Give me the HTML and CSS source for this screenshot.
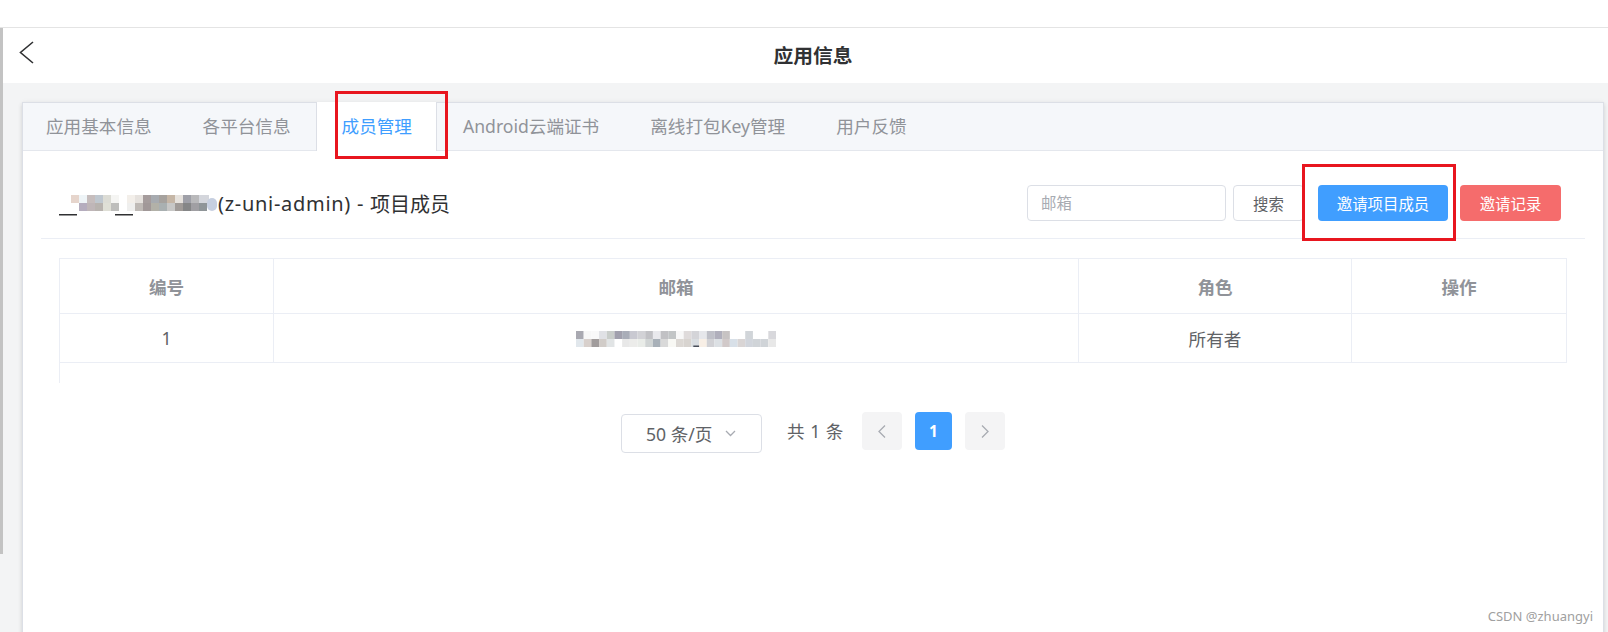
FILE: index.html
```html
<!DOCTYPE html>
<html lang="zh-CN">
<head>
<meta charset="utf-8">
<title>应用信息</title>
<link rel="stylesheet" href="styles.css">
</head>
<body>
<div class="topbar"></div>
<div class="frame">
  <div class="edge"></div>
  <div class="main">
    <header class="appbar">
      <button class="back" aria-label="返回">
        <svg width="18" height="24" viewBox="0 0 18 24"><polyline points="15,1 2.5,11.5 15,22" fill="none" stroke="#303133" stroke-width="1.6"/></svg>
      </button>
      <h1 class="app-title">应用信息</h1>
      <div></div>
    </header>
    <div class="page">
      <section class="card">
        <nav class="tabs">
          <div class="tab first">应用基本信息</div>
          <div class="tab">各平台信息</div>
          <div class="tab active">成员管理</div>
          <div class="tab">Android云端证书</div>
          <div class="tab">离线打包Key管理</div>
          <div class="tab">用户反馈</div>
        </nav>
        <div class="panel">
          <div class="panel-head">
            <div class="title">
              <svg class="mosaic-title" width="159" height="28" viewBox="0 0 159 28">
                <rect x="0" y="24" width="18" height="1.5" fill="#303133"/>
                <rect x="56" y="24" width="18" height="1.5" fill="#303133"/>
                <g>
                  <rect x="12" y="5" width="8" height="8" fill="#e6d5cc"/>
                  <rect x="20" y="5" width="8" height="8" fill="#eef4f7"/>
                  <rect x="28" y="5" width="8" height="8" fill="#c6bdbd"/>
                  <rect x="36" y="5" width="8" height="8" fill="#bfc7cf"/>
                  <rect x="44" y="5" width="8" height="8" fill="#dcdcd5"/>
                  <rect x="52" y="5" width="8" height="8" fill="#f5f5f3"/>
                  <rect x="60" y="5" width="8" height="8" fill="#ffffff"/>
                  <rect x="68" y="5" width="8" height="8" fill="#f3efea"/>
                  <rect x="76" y="5" width="8" height="8" fill="#e6e2de"/>
                  <rect x="84" y="5" width="8" height="8" fill="#a59c9c"/>
                  <rect x="92" y="5" width="8" height="8" fill="#a7abb0"/>
                  <rect x="100" y="5" width="8" height="8" fill="#a6a29e"/>
                  <rect x="108" y="5" width="8" height="8" fill="#c5b6a6"/>
                  <rect x="116" y="5" width="8" height="8" fill="#e6e2dd"/>
                  <rect x="124" y="5" width="8" height="8" fill="#9fa0a8"/>
                  <rect x="132" y="5" width="8" height="8" fill="#b9b9bb"/>
                  <rect x="140" y="5" width="10" height="8" fill="#d4d6dc"/>
                </g>
                <g>
                  <rect x="20" y="13" width="8" height="8" fill="#b5adbe"/>
                  <rect x="28" y="13" width="8" height="8" fill="#bfb6b8"/>
                  <rect x="36" y="13" width="8" height="8" fill="#b8b3af"/>
                  <rect x="44" y="13" width="8" height="8" fill="#dfdfd6"/>
                  <rect x="52" y="13" width="8" height="8" fill="#bebebc"/>
                  <rect x="68" y="13" width="8" height="8" fill="#efefee"/>
                  <rect x="76" y="13" width="8" height="8" fill="#bfbab6"/>
                  <rect x="84" y="13" width="8" height="8" fill="#a19898"/>
                  <rect x="92" y="13" width="8" height="8" fill="#b2b1a8"/>
                  <rect x="100" y="13" width="8" height="8" fill="#a9b0b1"/>
                  <rect x="108" y="13" width="8" height="8" fill="#c7c7c6"/>
                  <rect x="116" y="13" width="8" height="8" fill="#a09b98"/>
                  <rect x="124" y="13" width="8" height="8" fill="#858687"/>
                  <rect x="132" y="13" width="8" height="8" fill="#a09fa3"/>
                  <rect x="140" y="13" width="8" height="8" fill="#8f9598"/>
                  <rect x="148" y="8" width="10" height="13" rx="5" fill="#c6cfe0"/>
                </g>
              </svg>
              <span class="latin">(z-uni-admin) - </span><span>项目成员</span>
            </div>
            <div class="tools">
              <input class="search-input" type="text" placeholder="邮箱">
              <button class="btn btn-default">搜索</button>
              <button class="btn btn-primary">邀请项目成员</button>
              <button class="btn btn-danger">邀请记录</button>
            </div>
          </div>

          <div class="grid" role="table">
            <div class="cell th" role="columnheader">编号</div>
            <div class="cell th" role="columnheader">邮箱</div>
            <div class="cell th" role="columnheader">角色</div>
            <div class="cell th" role="columnheader">操作</div>
            <div class="cell td" role="cell">1</div>
            <div class="cell td" role="cell">
              <svg class="mosaic-mail" width="200" height="16" viewBox="0 0 208 16" preserveAspectRatio="none">
                <g>
                  <rect x="0" y="0" width="8" height="8" fill="#a9a9b1"/>
                  <rect x="8" y="0" width="8" height="8" fill="#f7f7f7"/>
                  <rect x="16" y="0" width="8" height="8" fill="#f9f9f9"/>
                  <rect x="24" y="0" width="8" height="8" fill="#e0e1e5"/>
                  <rect x="32" y="0" width="8" height="8" fill="#c9cdca"/>
                  <rect x="40" y="0" width="8" height="8" fill="#a1a0ad"/>
                  <rect x="48" y="0" width="8" height="8" fill="#a9adb8"/>
                  <rect x="56" y="0" width="8" height="8" fill="#c9c9d1"/>
                  <rect x="64" y="0" width="8" height="8" fill="#d2d2d6"/>
                  <rect x="72" y="0" width="8" height="8" fill="#c1c1c5"/>
                  <rect x="80" y="0" width="8" height="8" fill="#e9e9ed"/>
                  <rect x="88" y="0" width="8" height="8" fill="#c1c1c4"/>
                  <rect x="96" y="0" width="8" height="8" fill="#c2c5c6"/>
                  <rect x="104" y="0" width="8" height="8" fill="#f8f8f8"/>
                  <rect x="112" y="0" width="8" height="8" fill="#dfdbdb"/>
                  <rect x="120" y="0" width="8" height="8" fill="#d4d4d8"/>
                  <rect x="128" y="0" width="8" height="8" fill="#e6e7eb"/>
                  <rect x="136" y="0" width="8" height="8" fill="#bfc0c8"/>
                  <rect x="144" y="0" width="8" height="8" fill="#b0afbc"/>
                  <rect x="152" y="0" width="8" height="8" fill="#c7c3c3"/>
                  <rect x="176" y="0" width="8" height="8" fill="#d1d5d9"/>
                  <rect x="200" y="0" width="8" height="8" fill="#d8d8dc"/>
                </g>
                <g>
                  <rect x="0" y="8" width="8" height="8" fill="#e1e7ec"/>
                  <rect x="8" y="8" width="8" height="8" fill="#d8d0cc"/>
                  <rect x="16" y="8" width="8" height="8" fill="#a19c9c"/>
                  <rect x="24" y="8" width="8" height="8" fill="#d1ccc8"/>
                  <rect x="32" y="8" width="8" height="8" fill="#e1e4e5"/>
                  <rect x="48" y="8" width="8" height="8" fill="#e8e8e8"/>
                  <rect x="56" y="8" width="8" height="8" fill="#ececea"/>
                  <rect x="64" y="8" width="8" height="8" fill="#e9ece8"/>
                  <rect x="72" y="8" width="8" height="8" fill="#d0d4d4"/>
                  <rect x="80" y="8" width="8" height="8" fill="#a8b0b8"/>
                  <rect x="88" y="8" width="8" height="8" fill="#d9d9d9"/>
                  <rect x="96" y="8" width="8" height="8" fill="#f8f8f4"/>
                  <rect x="104" y="8" width="8" height="8" fill="#dcd8d4"/>
                  <rect x="112" y="8" width="8" height="8" fill="#d8d4d0"/>
                  <rect x="120" y="8" width="8" height="8" fill="#d9dde1"/>
                  <rect x="128" y="8" width="8" height="8" fill="#f8efe6"/>
                  <rect x="136" y="8" width="8" height="8" fill="#d1d1d5"/>
                  <rect x="144" y="8" width="8" height="8" fill="#dce0e4"/>
                  <rect x="152" y="8" width="8" height="8" fill="#d1c9c9"/>
                  <rect x="160" y="8" width="8" height="8" fill="#d8e0e8"/>
                  <rect x="168" y="8" width="8" height="8" fill="#d9d5d5"/>
                  <rect x="176" y="8" width="8" height="8" fill="#d1d5dc"/>
                  <rect x="184" y="8" width="8" height="8" fill="#d0d4d8"/>
                  <rect x="192" y="8" width="8" height="8" fill="#d0d4d8"/>
                  <rect x="200" y="8" width="8" height="8" fill="#e8e8e8"/>
                  <rect x="122" y="14.5" width="6" height="1.5" fill="#4a4f5a"/>
                </g>
              </svg>
            </div>
            <div class="cell td" role="cell">所有者</div>
            <div class="cell td" role="cell"></div>
          </div>
          <div class="filler"></div>

          <div class="pager">
            <div class="size-select">
              <span>50 条/页</span>
              <svg class="chev-down" width="11" height="7" viewBox="0 0 11 7"><polyline points="1,1 5.5,5.5 10,1" fill="none" stroke="#a8abb2" stroke-width="1.3"/></svg>
            </div>
            <span class="total">共 1 条</span>
            <button class="pg" aria-label="上一页"><svg width="8" height="13" viewBox="0 0 8 13"><polyline points="7,0.5 1,6.5 7,12.5" fill="none" stroke="#a8abb2" stroke-width="1.3"/></svg></button>
            <button class="pg active">1</button>
            <button class="pg" aria-label="下一页"><svg width="8" height="13" viewBox="0 0 8 13"><polyline points="1,0.5 7,6.5 1,12.5" fill="none" stroke="#a8abb2" stroke-width="1.3"/></svg></button>
          </div>
        </div>
      </section>
    </div>
  </div>
  <div class="watermark">CSDN @zhuangyi</div>
</div>
<div class="mark mark-tab"></div>
<div class="mark mark-btn"></div>
</body>
</html>
```

FILE: styles.css
```css
* { box-sizing: border-box; }

html, body {
  margin: 0;
  padding: 0;
}

body {
  width: 1608px;
  height: 632px;
  overflow: hidden;
  background: #ffffff;
  font-family: "Noto Sans", "Noto Sans CJK SC", sans-serif;
  color: #303133;
}

.topbar {
  height: 28px;
  border-bottom: 1px solid #e4e4e4;
  background: #ffffff;
}

.frame {
  position: relative;
  display: flex;
  height: 604px;
  background: #f3f4f5;
  overflow: hidden;
}

.edge {
  flex: none;
  width: 3px;
  height: 526px;
  background: #c3c3c3;
}

.main {
  flex: 1;
  min-width: 0;
  display: flex;
  flex-direction: column;
}

.appbar {
  flex: none;
  height: 55px;
  background: #ffffff;
  display: grid;
  grid-template-columns: 1fr auto 1fr;
  align-items: center;
  padding-left: 15px;
}

.back {
  justify-self: start;
  align-self: start;
  margin: 13px 0 0 0;
  padding: 0;
  border: 0;
  background: none;
  width: 18px;
  height: 24px;
  display: block;
}

.back svg { display: block; }

.app-title {
  margin: 0;
  font-size: 19.8px;
  font-weight: 700;
  color: #303133;
  line-height: 1;
}

.page {
  flex: 1;
  padding: 19px 4px 0 19px;
}

.card {
  height: 600px;
  background: #ffffff;
  border: 1px solid #dcdfe6;
  box-shadow: 0 2px 4px rgba(0, 0, 0, 0.12), 0 0 6px rgba(0, 0, 0, 0.04);
}

.tabs {
  display: flex;
  align-items: flex-start;
  height: 48px;
  background: #f5f7fa;
  border-bottom: 1px solid #e4e7ed;
}

.tab {
  height: 48px;
  line-height: 47px;
  padding: 0 24.5px;
  border-left: 1px solid transparent;
  border-right: 1px solid transparent;
  font-size: 17.6px;
  color: #909399;
  white-space: nowrap;
}

.tab.first { padding-left: 22px; }

.tab.active {
  background: #ffffff;
  color: #409eff;
  border-left-color: #dcdfe6;
  border-right-color: #dcdfe6;
  margin-top: -1px;
  height: 49px;
  line-height: 49px;
}

.panel {
  position: relative;
  padding: 0 18px;
}

.panel-head {
  display: flex;
  align-items: center;
  justify-content: space-between;
  margin-top: 34px;
  height: 54px;
  padding: 0 24px 17px 18px;
  border-bottom: 1px solid #ebeef5;
}

.title {
  display: flex;
  align-items: center;
  font-size: 20px;
  color: #303133;
  white-space: nowrap;
}

.mosaic-title {
  display: block;
  flex: none;
  margin-top: 2px;
}

.latin {
  letter-spacing: 0.7px;
  white-space: pre;
}

.tools {
  display: flex;
  align-items: center;
}

.search-input {
  width: 199px;
  height: 36px;
  border: 1px solid #dcdfe6;
  border-radius: 4px;
  padding: 0 13px;
  font-family: inherit;
  font-size: 15.4px;
  color: #606266;
  outline: none;
}

.search-input::placeholder { color: #a8abb2; }

.btn {
  height: 36px;
  padding: 0;
  border-radius: 4px;
  font-family: inherit;
  font-size: 15.4px;
  cursor: pointer;
}

.btn-default {
  width: 71px;
  margin-left: 7px;
  border: 1px solid #dcdfe6;
  background: #ffffff;
  color: #606266;
}

.btn-primary {
  width: 130px;
  margin-left: 14px;
  border: 0;
  background: #409eff;
  color: #ffffff;
}

.btn-danger {
  width: 101px;
  margin-left: 12px;
  border: 0;
  background: #f56c6c;
  color: #ffffff;
}

.grid {
  margin: 19px 18px 0;
  display: grid;
  grid-template-columns: 214fr 805fr 273fr 215fr;
  border-top: 1px solid #ebeef5;
  border-left: 1px solid #ebeef5;
}

.cell {
  display: flex;
  align-items: center;
  justify-content: center;
  border-right: 1px solid #ebeef5;
  border-bottom: 1px solid #ebeef5;
  font-size: 17.6px;
  color: #606266;
}

.th {
  height: 55px;
  font-weight: 700;
  color: #909399;
}

.td { height: 49px; }

.mosaic-mail {
  display: block;
  margin-top: 1px;
}

.filler {
  height: 20px;
  margin: 0 18px;
  border-left: 1px solid #ebeef5;
}

.pager {
  margin-top: 29px;
  display: flex;
  justify-content: center;
  align-items: flex-start;
}

.size-select {
  width: 141px;
  height: 39px;
  margin-top: 2px;
  display: flex;
  align-items: center;
  padding-left: 24px;
  border: 1px solid #dcdfe6;
  border-radius: 4px;
  font-size: 17.6px;
  color: #606266;
  white-space: nowrap;
}

.chev-down {
  display: block;
  margin-left: 13px;
}

.total {
  width: 56px;
  margin: 0 19px 0 25px;
  line-height: 38px;
  font-size: 17.6px;
  color: #606266;
  white-space: nowrap;
  word-spacing: 1px;
}

.pg {
  width: 40px;
  height: 38px;
  padding: 0;
  border: 0;
  border-radius: 4px;
  background: #f4f4f5;
  display: flex;
  align-items: center;
  justify-content: center;
  font-family: inherit;
}

.pg + .pg { margin-left: 13px; }

.pg svg { display: block; }

.pg.active {
  width: 37px;
  background: #409eff;
  color: #ffffff;
  font-weight: 700;
  font-size: 15.4px;
}

.watermark {
  position: absolute;
  right: 15px;
  bottom: 8px;
  font-size: 13px;
  line-height: 16px;
  color: #a0a0a0;
}

.mark {
  position: absolute;
  border: 3px solid #e8161f;
  z-index: 10;
}

.mark-tab {
  left: 335px;
  top: 91px;
  width: 113px;
  height: 68px;
}

.mark-btn {
  left: 1302px;
  top: 164px;
  width: 154px;
  height: 77px;
}
```
